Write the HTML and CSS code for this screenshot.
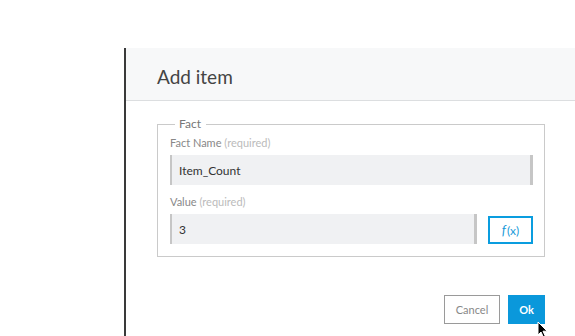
FILE: index.html
```html
<!DOCTYPE html>
<html lang="en">
<head>
    <meta charset="UTF-8">
    <meta name="viewport" content="width=device-width, initial-scale=1.0">
    <title>Add item</title>
    <link rel="stylesheet" href="styles.css">
</head>
<body>
    <!-- BEGIN::page -->
    <div class="page">
        <!-- BEGIN::dialog -->
        <section class="dialog">
            <header class="dialog-header">
                <h1>Add item</h1>
            </header>
            <div class="dialog-body">
                <fieldset class="fact">
                    <legend>Fact</legend>
                    <label class="field-label">Fact Name <span class="req">(required)</span></label>
                    <div class="input-row">
                        <input class="text-input" type="text" value="Item_Count">
                    </div>
                    <label class="field-label">Value <span class="req">(required)</span></label>
                    <div class="input-row">
                        <input class="text-input" type="text" value="3">
                        <button class="fx-button"><i>f</i>(x)</button>
                    </div>
                </fieldset>
                <div class="actions">
                    <button class="btn btn-cancel">Cancel</button>
                    <button class="btn btn-ok">Ok</button>
                </div>
            </div>
        </section>
        <!-- END::dialog -->
    </div>
    <!-- END::page -->

    <svg class="cursor" width="12" height="18" viewBox="0 0 12 18">
        <path d="M1 1 L1 14 L4 11 L6.5 16.5 L8.5 15.6 L6 10.2 L10.2 10.2 Z" fill="#000" stroke="#fff" stroke-width="1"/>
    </svg>
</body>
</html>
```
FILE: styles.css
```css
*{
    margin: 0;
    padding: 0;
    box-sizing: border-box;
    font-family: 'Lato', 'Liberation Sans', sans-serif;
}

body{
    background: #fff;
    width: 575px;
    height: 336px;
    overflow: hidden;
    position: relative;
}

.page{
    padding: 48px 0 0 124px;
    height: 336px;
}

.dialog{
    border-left: 2px solid #3a3a3a;
    height: 100%;
    width: 451px;
    background: #fff;
}

.dialog-header{
    height: 53px;
    background: #f7f8f9;
    border-bottom: 1px solid #dcdee0;
    padding: 4px 0 0 31px;
    display: flex;
    align-items: center;
}

.dialog-header h1{
    font-size: 19px;
    font-weight: 400;
    color: #444;
}

.dialog-body{
    padding: 16px 0 0 31px;
    width: 419px;
}

.fact{
    border: 1px solid #cacaca;
    padding: 0 11px 12px 12px;
}

.fact legend{
    font-size: 12px;
    color: #777;
    padding: 0 5px 0 4px;
    margin-left: 5px;
    line-height: 14px;
}

.field-label{
    display: block;
    font-size: 11px;
    color: #888;
    line-height: 14px;
    margin: 5px 0 5px;
}

.field-label .req{
    color: #bbb;
}

.input-row{
    display: flex;
    align-items: flex-start;
    gap: 11px;
}

.input-row + .field-label{
    margin-top: 10px;
}

.text-input{
    flex: 1;
    height: 30px;
    background: #f0f1f3;
    border: none;
    border-left: 2px solid #c6c6c6;
    border-right: 3px solid #c6c6c6;
    padding-left: 7px;
    font-size: 12px;
    color: #333;
    outline: none;
}

.fx-button{
    width: 45px;
    height: 28px;
    margin-top: 2px;
    background: #fff;
    border: 2px solid #0a9ddf;
    color: #1a9ad8;
    font-size: 12px;
}

.fx-button i{
    font-size: 13px;
    margin-right: 1px;
}

.actions{
    display: flex;
    justify-content: flex-end;
    gap: 8px;
    margin-top: 38px;
}

.btn{
    height: 29px;
    font-size: 11px;
    border: none;
}

.btn-cancel{
    width: 56px;
    background: #fff;
    border: 1px solid #9a9a9a;
    color: #888;
}

.btn-ok{
    width: 37px;
    background: #0a98db;
    color: #fff;
    font-weight: 700;
}

.cursor{
    position: absolute;
    left: 537px;
    top: 321px;
}
```
